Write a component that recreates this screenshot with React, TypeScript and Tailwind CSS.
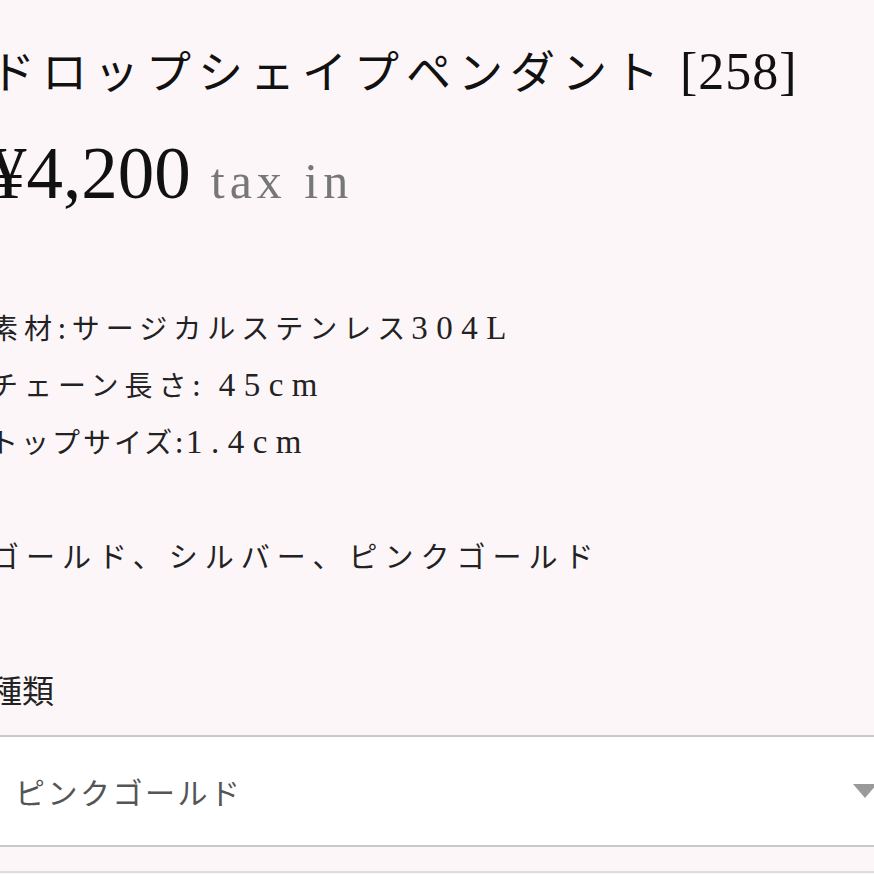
import React from 'react';

const serif = "font-['Liberation_Serif','Noto_Sans_CJK_JP',serif]";
const jp = "font-['Noto_Sans_CJK_JP',sans-serif]";

const specs = [
  { jp: '素材:サージカルステンレス', latin: '304L', track: 'tracking-[6px]' },
  { jp: 'チェーン長さ: ', latin: '45cm', track: 'tracking-[6px]' },
  { jp: 'トップサイズ:', latin: '1.4cm', track: 'tracking-[3px]' },
];

export default function App() {
  return (
    <div className="w-[874px] h-[874px] overflow-hidden bg-[#fcf6f9]">
      <div className="-ml-[10px] w-[902px] pt-[42px]">
        {/* Title */}
        <h1 className="text-[45px] leading-[60px] whitespace-nowrap text-[#111]">
          <span className={`${jp} leading-none tracking-[7px]`}>ドロップシェイプペンダント</span>
          <span className={`${serif} leading-none text-[52px] tracking-[1px]`}> [258]</span>
        </h1>

        {/* Price */}
        <div className={`${serif} mt-[32px] text-[73px] leading-[80px] whitespace-nowrap`}>
          <span className="leading-none text-[#111]">¥4,200</span>
          <span className="leading-none text-[50px] text-[#777] tracking-[5px] ml-[20px]">tax in</span>
        </div>

        {/* Specs */}
        <div className="mt-[86px] text-[#222]">
          {specs.map((s) => (
            <p key={s.latin} className="text-[28px] leading-[57px] h-[57px] whitespace-nowrap">
              <span className={`${jp} leading-none ${s.track}`}>{s.jp}</span>
              <span className={`${serif} leading-none text-[33px] tracking-[8.5px]`}>{s.latin}</span>
            </p>
          ))}
          <p className="h-[56px]" />
          <p className={`${jp} h-[57px] leading-[57px] text-[29px] tracking-[7px] whitespace-nowrap`}>
            ゴールド、シルバー、ピンクゴールド
          </p>
        </div>

        {/* Option label */}
        <p className={`${jp} mt-[77px] h-[56px] leading-[56px] text-[32px] text-[#222]`}>種類</p>

        {/* Select */}
        <div className="mt-[18px] h-[112px] bg-white border-y-2 border-[#c9c9c9] flex items-center justify-between pl-[25px] pr-[14px]">
          <span className={`${jp} text-[30px] tracking-[2.5px] text-[#555]`}>ピンクゴールド</span>
          <svg width="26" height="16" viewBox="0 0 26 16">
            <path d="M1 1 L25 1 L13 15 Z" fill="#9a9a9a" />
          </svg>
        </div>

        {/* Next field (cut off) */}
        <div className="h-[26px] border-b-2 border-[#dddddd] bg-[#fcf6f9]" />
      </div>
    </div>
  );
}
